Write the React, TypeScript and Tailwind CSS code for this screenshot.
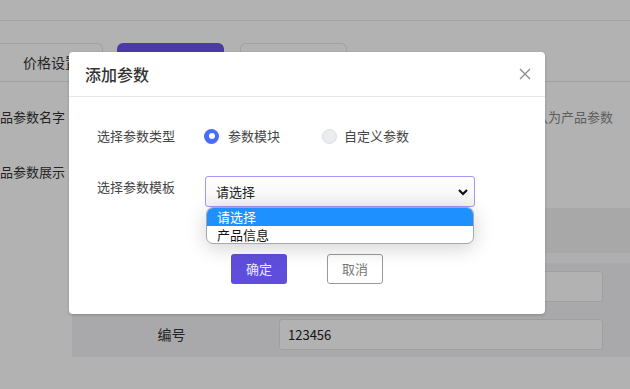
import React from "react";

const cjk = { fontFamily: '"Noto Sans CJK SC", "Noto Sans", sans-serif' };

function Radio({ checked }: { checked: boolean }) {
  return checked ? (
    <span className="flex h-[15px] w-[15px] items-center justify-center rounded-full bg-[#4a6cf7]">
      <span className="h-[6px] w-[6px] rounded-full bg-white" />
    </span>
  ) : (
    <span className="h-[15px] w-[15px] rounded-full border border-[#dcdfe6] bg-[#ebecf0]" />
  );
}

export default function App() {
  return (
    <div className="relative h-[389px] w-[630px] overflow-hidden bg-white text-[#333]" style={cjk}>
      {/* page behind the dialog */}
      <div className="h-[21px] border-b border-[#e8e8e8]" />
      <div className="flex h-[61px] items-end gap-[14px] border-b border-[#e5e5e5] pb-[1px]">
        <div className="flex h-[37px] w-[118px] -ml-[15px] items-center justify-center rounded-t-md border border-b-0 border-[#e6e6e6] pl-[14px] text-[14px] text-[#333]">
          价格设置
        </div>
        <div className="h-[37px] w-[107px] rounded-t-md bg-[#6b54f2]" />
        <div className="ml-[2px] h-[37px] w-[107px] rounded-t-md border border-b-0 border-[#e6e6e6]" />
      </div>
      <div className="flex h-[70px] items-center justify-between text-[13px]">
        <span className="text-[#333]">品参数名字</span>
        <span className="mr-[17px] text-[#888]">默认为产品参数</span>
      </div>
      <div className="flex h-[56px] items-start pt-[11px] text-[13px] leading-[18px]">
        <span className="text-[#333]">品参数展示</span>
      </div>
      <div className="ml-[72px] h-[149px] bg-[#f3f3f5]">
        <div className="h-[45px] bg-[#f1f1f3]" />
        <div className="h-[10px] bg-[#fbfbfb]" />
        <div className="flex flex-col gap-[17px] pt-[8px]">
          <div className="flex items-center">
            <span className="w-[207px]" />
            <div className="h-[31px] w-[324px] rounded-[3px] border border-[#e4e4e4] bg-white" />
          </div>
          <div className="flex items-center">
            <span className="w-[207px] pr-[8px] text-center text-[14px] text-[#333]">编号</span>
            <div className="flex h-[31px] w-[324px] items-center rounded-[3px] border border-[#e4e4e4] bg-white px-[8px] text-[13px] text-[#222]">
              123456
            </div>
          </div>
        </div>
      </div>

      {/* overlay */}
      <div className="absolute inset-0 bg-black/30" />

      {/* dialog */}
      <div className="absolute left-[69px] top-[52px] h-[262px] w-[476px] rounded-[4px] bg-white shadow-[0_1px_3px_rgba(0,0,0,0.2)]">
        <div className="flex h-[45px] items-center justify-between border-b border-[#e8e8e8] pl-[16px] pr-[14px]">
          <span className="text-[16px] font-medium text-[#333]">添加参数</span>
          <svg width="12" height="12" viewBox="0 0 12 12" className="text-[#8a8a8a]">
            <path d="M1 1 L11 11 M11 1 L1 11" stroke="currentColor" strokeWidth="1.3" fill="none" />
          </svg>
        </div>
        <div className="flex flex-col pl-[28px] pt-[29px]">
          <div className="flex h-[20px] items-center text-[13px]">
            <span className="w-[107px] text-[#444]">选择参数类型</span>
            <span className="flex items-center gap-[9px]">
              <Radio checked />
              <span className="text-[#444]">参数模块</span>
            </span>
            <span className="ml-[42px] flex items-center gap-[7px]">
              <Radio checked={false} />
              <span className="text-[#444]">自定义参数</span>
            </span>
          </div>
          <div className="mt-[30px] flex items-start text-[13px]">
            <span className="w-[108px] pt-[1px] text-[#444]">选择参数模板</span>
            <div className="relative">
              <div className="flex h-[31px] w-[270px] items-center justify-between rounded-[3px] border-[1.5px] border-[#a995f7] bg-gradient-to-b from-white to-[#f4f4f4] pl-[10px] pr-[5px] text-[#222]">
                <span>请选择</span>
                <svg width="12" height="10" viewBox="0 0 12 10">
                  <path d="M2 3 L6 7 L10 3" stroke="#111" strokeWidth="2.2" fill="none" />
                </svg>
              </div>
              <div className="absolute left-[1px] top-[31px] z-10 w-[268px] overflow-hidden rounded-[7px] border border-[#a8a8a8] bg-white text-[13px] leading-[17px] shadow-[0_4px_20px_rgba(0,0,0,0.18)]">
                <div className="h-[18px] bg-[#1e90ff] pl-[10px] text-white">请选择</div>
                <div className="h-[17px] pl-[10px] text-[#111]">产品信息</div>
              </div>
            </div>
          </div>
          <div className="mt-[47px] flex justify-center gap-[40px] pr-[28px]">
            <button className="h-[30px] w-[56px] rounded-[3px] bg-[#5f4edc] text-[13px] text-[#eeeaff]">确定</button>
            <button className="h-[30px] w-[56px] rounded-[3px] border-[1.5px] border-[#9a9a9a] bg-white text-[13px] text-[#777]">取消</button>
          </div>
        </div>
      </div>
    </div>
  );
}
